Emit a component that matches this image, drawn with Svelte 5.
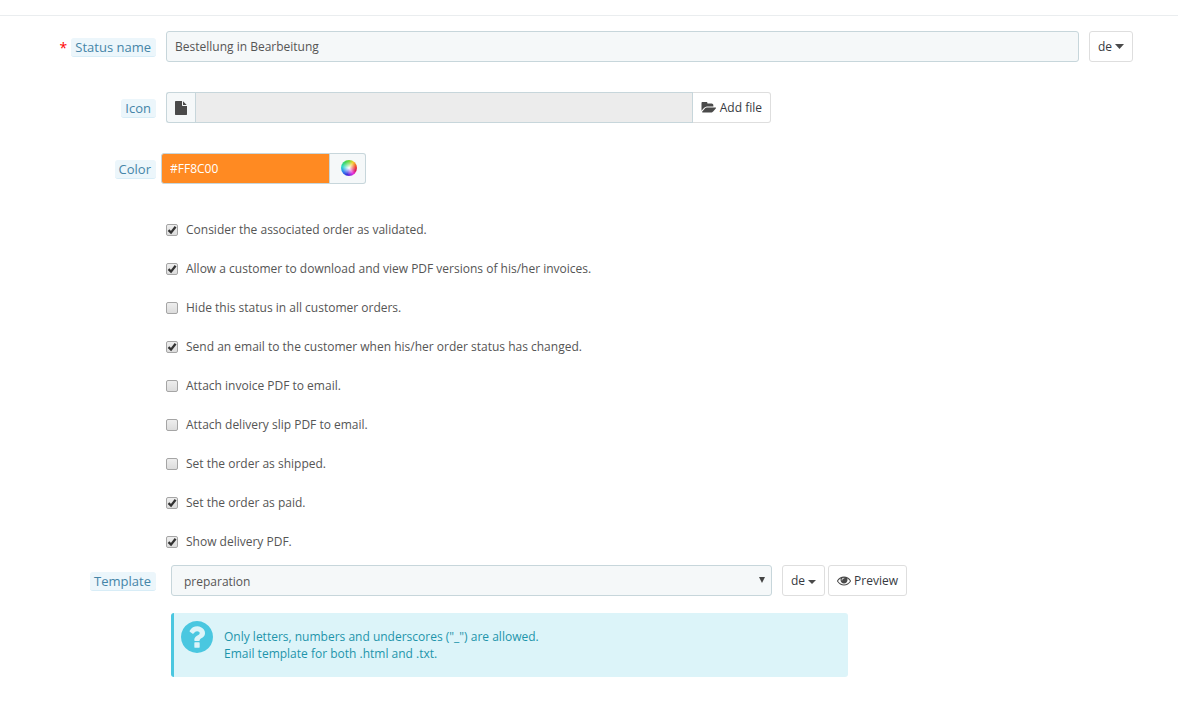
<script>
  let statusName = $state("Bestellung in Bearbeitung");
  let color = $state("#FF8C00");
  let template = $state("preparation");

  let options = $state([
    { id: "logable", label: "Consider the associated order as validated.", on: true },
    { id: "invoice", label: "Allow a customer to download and view PDF versions of his/her invoices.", on: true },
    { id: "hidden", label: "Hide this status in all customer orders.", on: false },
    { id: "send_email", label: "Send an email to the customer when his/her order status has changed.", on: true },
    { id: "pdf_invoice", label: "Attach invoice PDF to email.", on: false },
    { id: "pdf_delivery", label: "Attach delivery slip PDF to email.", on: false },
    { id: "shipped", label: "Set the order as shipped.", on: false },
    { id: "paid", label: "Set the order as paid.", on: true },
    { id: "delivery", label: "Show delivery PDF.", on: true },
  ]);
</script>

<form class="panel">
  <div class="row">
    <div class="labelCell">
      <span class="required">*</span>
      <label class="tag" for="name">Status name</label>
    </div>
    <div class="controls wide">
      <input id="name" class="field" type="text" bind:value={statusName} />
      <button type="button" class="btn lang">
        de
        <svg class="caret" viewBox="0 0 9 5"><path d="M0 0h9L4.500 5z" /></svg>
      </button>
    </div>
  </div>

  <div class="row">
    <div class="labelCell"><label class="tag" for="icon">Icon</label></div>
    <div class="controls">
      <div class="group fileGroup">
        <span class="addon">
          <svg class="fileIcon" viewBox="128 0 1536 1792">
            <path d="M1152 512v-472q22 14 36 28l408 408q14 14 28 36h-472zm-128 32q0 40 28 68t68 28h544v1056q0 40-28 68t-68 28h-1344q-40 0-68-28t-28-68v-1600q0-40 28-68t68-28h800v544z" />
          </svg>
        </span>
        <input id="icon" class="field readonly" type="text" readonly />
        <button type="button" class="btn">
          <svg class="folderIcon" viewBox="0 256 1943 1280">
            <path d="M1943 952q0 31-31 66l-336 396q-43 51-120.500 86.500t-143.500 35.500h-1088q-34 0-60.500-13t-26.500-43q0-31 31-66l336-396q43-51 120.500-86.500t143.500-35.500h1088q34 0 60.500 13t26.500 43zm-343-344v160h-832q-94 0-197 47.500t-164 119.500l-337 396-5 6q0-4-.5-12.500t-.5-12.500v-960q0-92 66-158t158-66h320q92 0 158 66t66 158v32h544q92 0 158 66t66 158z" />
          </svg>
          Add file
        </button>
      </div>
    </div>
  </div>

  <div class="row">
    <div class="labelCell"><label class="tag" for="color">Color</label></div>
    <div class="controls flush">
      <div class="group colorGroup">
        <input id="color" class="field swatch" type="text" bind:value={color} />
        <button type="button" class="picker" aria-label="Pick a color">
          <span class="wheel"></span>
        </button>
      </div>
    </div>
  </div>

  <div class="checks">
    {#each options as option}
      <label class="check" for={option.id}>
        <input id={option.id} type="checkbox" bind:checked={option.on} />
        {option.label}
      </label>
    {/each}
  </div>

  <div class="row templateRow">
    <div class="labelCell"><label class="tag" for="template">Template</label></div>
    <div class="controls inset">
      <select id="template" class="field" bind:value={template}>
        <option value="preparation">preparation</option>
        <option value="payment">payment</option>
        <option value="shipped">shipped</option>
      </select>
      <div class="actions">
        <button type="button" class="btn lang">
          de
          <svg class="caret small" viewBox="0 0 8 4"><path d="M0 0h8L4 4z" /></svg>
        </button>
        <button type="button" class="btn preview">
          <svg class="eyeIcon" viewBox="0 384 1792 1152">
            <path d="M1664 960q-152-236-381-353 61 104 61 225 0 185-131.500 316.500t-316.500 131.500-316.500-131.500-131.500-316.500q0-121 61-225-229 117-381 353 133 205 333.500 326.500t434.500 121.500 434.500-121.500 333.500-326.500zm-720-384q0-20-14-34t-34-14q-125 0-214.500 89.500t-89.500 214.500q0 20 14 34t34 14 34-14 14-34q0-86 61-147t147-61q20 0 34-14t14-34zm848 384q0 34-20 69-140 230-376.500 368.500t-499.500 138.500-499.500-139-376.500-368q-20-35-20-69t20-69q140-229 376.500-368t499.500-139 499.500 139 376.500 368q20 35 20 69z" />
          </svg>
          Preview
        </button>
      </div>
    </div>
  </div>

  <div class="row">
    <div class="labelCell"></div>
    <div class="controls inset">
      <div class="info">
        <svg class="question" viewBox="128 128 1536 1536">
          <path d="M1024 1376v-192q0-14-9-23t-23-9h-192q-14 0-23 9t-9 23v192q0 14 9 23t23 9h192q14 0 23-9t9-23zm256-672q0-88-55.500-163t-138.500-116-170-41q-243 0-371 213-15 24 8 42l132 100q7 6 19 6 16 0 25-12 53-68 86-92 34-24 86-24 48 0 85.500 26t37.500 59q0 38-20 61t-68 45q-63 28-115.500 86.500t-52.500 125.500v36q0 14 9 23t23 9h192q14 0 23-9t9-23q0-19 21.500-49.500t54.500-49.500q32-18 49-28.500t46-35 44.500-48 28-60.500 12.500-81zm384 192q0 209-103 385.500t-279.500 279.500-385.500 103-385.500-103-279.500-279.500-103-385.500 103-385.500 279.500-279.500 385.500-103 385.500 103 279.500 279.500 103 385.500z" />
        </svg>
        <p>
          Only letters, numbers and underscores ("_") are allowed.<br />
          Email template for both .html and .txt.
        </p>
      </div>
    </div>
  </div>
</form>

<style>
  :global(body) {
    margin: 0;
    background: #fff;
  }
  .panel,
  .panel input,
  .panel select,
  .panel button {
    box-sizing: border-box;
    font-family: "Open Sans", sans-serif;
    font-size: 12px;
    line-height: 17px;
    color: #555;
  }
  .panel {
    margin-top: 15px;
    border-top: 1px solid #eaedef;
    padding: 15px 45px 24px 0;
  }
  .row {
    display: grid;
    grid-template-columns: 156px minmax(0, 1fr);
    margin-bottom: 30px;
  }
  .labelCell {
    display: flex;
    justify-content: flex-end;
    align-items: center;
    gap: 4px;
    padding-top: 2px;
  }
  .required {
    font-size: 14px;
    color: #f00;
  }
  .tag {
    padding: 0 5px 0 4px;
    border-bottom: 1px solid #d8edf7;
    border-radius: 3px;
    background: #ecf6fb;
    font-size: 13px;
    line-height: 18px;
    color: #4585a8;
  }
  .controls {
    display: flex;
    padding-left: 10px;
  }
  .controls.wide {
    gap: 10px;
  }
  .controls.flush {
    padding-left: 5px;
  }
  .controls.inset {
    gap: 10px;
    padding-left: 15px;
  }
  .panel .field {
    flex: 1;
    min-width: 0;
    height: 31px;
    margin: 0;
    padding: 0 8px;
    border: 1px solid #c7d6db;
    border-radius: 3px;
    background-color: #f5f8f9;
    outline: none;
  }
  .btn {
    display: flex;
    align-items: center;
    gap: 4px;
    height: 31px;
    padding: 0 8px;
    border: 1px solid #dedede;
    border-radius: 3px;
    background: #fff;
    cursor: pointer;
  }
  .panel .btn {
    color: #363a41;
  }
  .btn svg,
  .addon svg {
    fill: #4a4a4a;
  }
  .btn.preview {
    gap: 3px;
  }
  .btn.lang {
    gap: 3px;
  }
  .caret {
    width: 9px;
    height: 5px;
  }
  .caret.small {
    width: 8px;
    height: 4px;
    margin-top: 2px;
  }
  .group {
    display: flex;
    width: 100%;
  }
  .fileGroup {
    max-width: 605px;
  }
  .addon {
    display: flex;
    align-items: center;
    justify-content: center;
    box-sizing: border-box;
    width: 29px;
    border: 1px solid #c7d6db;
    border-right: 0;
    border-radius: 3px 0 0 3px;
    background: #f5f8f9;
  }
  .fileIcon {
    width: 12px;
    height: 14px;
  }
  .folderIcon {
    width: 15px;
    height: 11px;
  }
  .eyeIcon {
    width: 14px;
    height: 10px;
  }
  .panel .readonly {
    border-radius: 0;
    background-color: #ececec;
  }
  .fileGroup .btn {
    border-left: 0;
    border-radius: 0 3px 3px 0;
  }
  .colorGroup {
    max-width: 205px;
  }
  .panel .swatch {
    border-radius: 3px 0 0 3px;
    background-color: #ff8a22;
    color: #fff;
  }
  .picker {
    display: flex;
    align-items: center;
    justify-content: center;
    width: 36px;
    height: 31px;
    padding: 0 0 2px 2px;
    border: 1px solid #c7d6db;
    border-left: 0;
    border-radius: 0 3px 3px 0;
    background: #f5f8f9;
    cursor: pointer;
  }
  .wheel {
    width: 16px;
    height: 16px;
    border-radius: 50%;
    background:
      radial-gradient(circle, #fff 0%, rgba(255, 255, 255, 0.4) 35%, transparent 60%),
      conic-gradient(#6fd63c, #f3d02c 35deg, #f0452c 80deg, #d81c5c 110deg, #e62ce0 145deg, #3a2cd8 195deg, #2c7cf0 235deg, #2cd8cc 280deg, #3cd65a 325deg, #6fd63c);
  }
  .checks {
    display: flex;
    flex-direction: column;
    align-items: flex-start;
    gap: 22px;
    margin-top: 37px;
    padding-left: 166px;
  }
  .check {
    display: flex;
    align-items: center;
    gap: 8px;
  }
  .check input {
    appearance: none;
    flex: none;
    width: 12px;
    height: 12px;
    margin: 1px 0 0;
    border: 1px solid #a5a5a5;
    border-radius: 2px;
    background: linear-gradient(#eee, #dcdcdc);
  }
  .check input:checked {
    background:
      url("data:image/svg+xml,<svg xmlns='http://www.w3.org/2000/svg' viewBox='0 0 10 10'><path d='M1.500 5.200L4 7.600L8.600 1.700' fill='none' stroke='%23333' stroke-width='2.300'/></svg>"),
      linear-gradient(#eee, #dcdcdc);
  }
  .templateRow {
    margin: 15px 0 17px;
  }
  .panel select.field {
    appearance: none;
    max-width: 601px;
    padding: 2px 12px 0;
    background-image: url("data:image/svg+xml,<svg xmlns='http://www.w3.org/2000/svg' viewBox='0 0 6 6'><path d='M0 0h6L3 6z' fill='%23444'/></svg>");
    background-repeat: no-repeat;
    background-position: right 6px top 11px;
    background-size: 6px 6px;
  }
  .actions {
    display: flex;
    gap: 3px;
  }
  .info {
    display: flex;
    gap: 11px;
    box-sizing: border-box;
    width: 100%;
    max-width: 677px;
    min-height: 64px;
    padding: 8px 7px;
    border-left: 3px solid #4ac7e0;
    border-radius: 3px;
    background: #dcf4f9;
    color: #1e94ab;
  }
  .question {
    flex: none;
    width: 32px;
    height: 32px;
    fill: #4ac7e0;
  }
  .info p {
    margin: 7px 0 0;
  }
</style>
